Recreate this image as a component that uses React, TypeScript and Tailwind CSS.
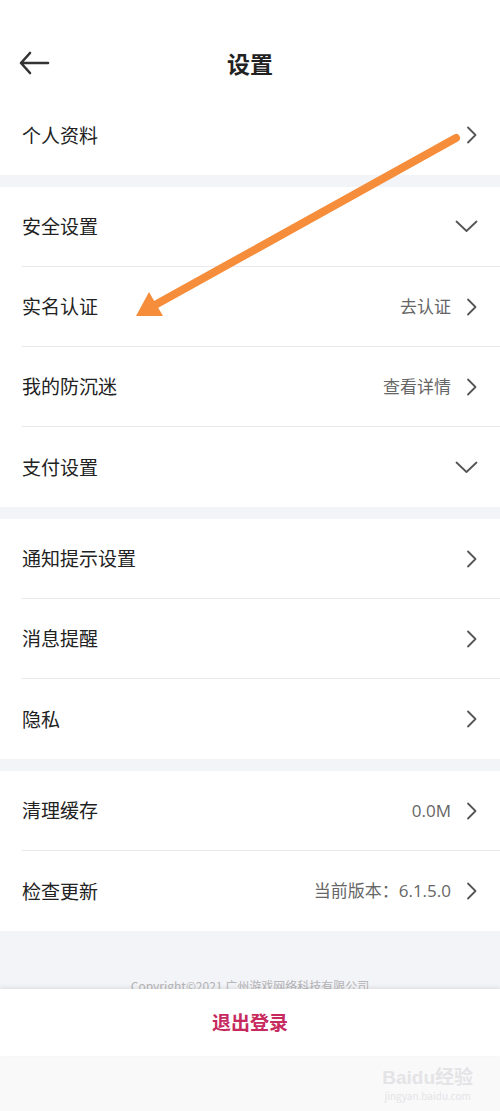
import React from "react";

const font = { fontFamily: "'Noto Sans CJK SC', 'Liberation Sans', sans-serif" };

function ChevronRight() {
  return (
    <svg width="12" height="18" viewBox="0 0 12 18" fill="none">
      <path d="M2 1.5 L9.5 9 L2 16.5" stroke="#555" strokeWidth="1.8" strokeLinecap="round" strokeLinejoin="round" />
    </svg>
  );
}

function ChevronDown() {
  return (
    <svg width="23" height="13" viewBox="0 0 23 13" fill="none">
      <path d="M1.5 1.5 L11.5 11 L21.5 1.5" stroke="#555" strokeWidth="1.8" strokeLinecap="round" strokeLinejoin="round" />
    </svg>
  );
}

type Item = { label: string; value?: string; down?: boolean };

function Row({ item, last }: { item: Item; last: boolean }) {
  return (
    <div
      className={
        "ml-[22px] pr-[22px] h-[80px] flex items-center justify-between " +
        (last ? "" : "border-b border-[#e9e9ec]")
      }
    >
      <span className="text-[19px] text-[#222]">{item.label}</span>
      <div className="flex items-center gap-[15px]">
        {item.value && (
          <span
            className="text-[17px] text-[#666]"
            style={{ fontFamily: "'Open Sans', 'Noto Sans CJK SC', sans-serif" }}
          >
            {item.value}
          </span>
        )}
        {item.down ? <ChevronDown /> : <ChevronRight />}
      </div>
    </div>
  );
}

function Section({ items }: { items: Item[] }) {
  return (
    <div className="bg-white">
      {items.map((it, i) => (
        <Row key={it.label} item={it} last={i === items.length - 1} />
      ))}
    </div>
  );
}

const gap = <div className="h-[12px] bg-[#f3f4f7]" />;

export default function App() {
  return (
    <div className="relative w-[500px] h-[1111px] bg-white overflow-hidden" style={font}>
      {/* header */}
      <div className="h-[95px] pt-[33px]">
        <div className="h-[60px] grid grid-cols-[1fr_auto_1fr] items-center">
          <div className="pl-[18px] flex items-center">
            <svg width="32" height="24" viewBox="0 0 32 24" fill="none">
              <path d="M12 2 L3 12 L12 22 M3 12 L30 12" stroke="#333" strokeWidth="2.6" strokeLinecap="round" strokeLinejoin="round" />
            </svg>
          </div>
          <h1 className="text-[23px] font-bold text-[#222]">设置</h1>
          <div />
        </div>
      </div>

      <Section items={[{ label: "个人资料" }]} />
      {gap}
      <Section
        items={[
          { label: "安全设置", down: true },
          { label: "实名认证", value: "去认证" },
          { label: "我的防沉迷", value: "查看详情" },
          { label: "支付设置", down: true },
        ]}
      />
      {gap}
      <Section
        items={[{ label: "通知提示设置" }, { label: "消息提醒" }, { label: "隐私" }]}
      />
      {gap}
      <Section
        items={[
          { label: "清理缓存", value: "0.0M" },
          { label: "检查更新", value: "当前版本：6.1.5.0" },
        ]}
      />

      {/* footer */}
      <div className="h-[58px] bg-[#f3f4f7] overflow-hidden pt-[49px] flex justify-center">
        <span className="text-[12px] text-[#b5b5b8] leading-none">Copyright©2021 广州游戏网络科技有限公司</span>
      </div>
      <div className="h-[67px] bg-white flex items-center justify-center shadow-[0_-2px_4px_rgba(0,0,0,0.08)] relative">
        <span className="text-[19px] font-bold text-[#c72a5e]">退出登录</span>
      </div>
      <div className="h-[56px] bg-[#f9f9fa] flex justify-end pr-[27px] pt-[12px]">
        <div className="flex flex-col items-center leading-none text-[#e4e4e6]">
          <span className="text-[19px] font-bold" style={{ fontFamily: "'Liberation Sans', 'Noto Sans CJK SC', sans-serif" }}>
            Baidu经验
          </span>
          <span className="text-[10px] mt-[4px]">jingyan.baidu.com</span>
        </div>
      </div>

      {/* orange annotation arrow */}
      <svg className="absolute left-0 top-0 pointer-events-none" width="500" height="1111" viewBox="0 0 500 1111">
        <line x1="456" y1="138" x2="155" y2="305" stroke="#f58d3a" strokeWidth="8" strokeLinecap="round" />
        <polygon points="136,316 149,292 163,316" fill="#f58d3a" />
      </svg>
    </div>
  );
}
